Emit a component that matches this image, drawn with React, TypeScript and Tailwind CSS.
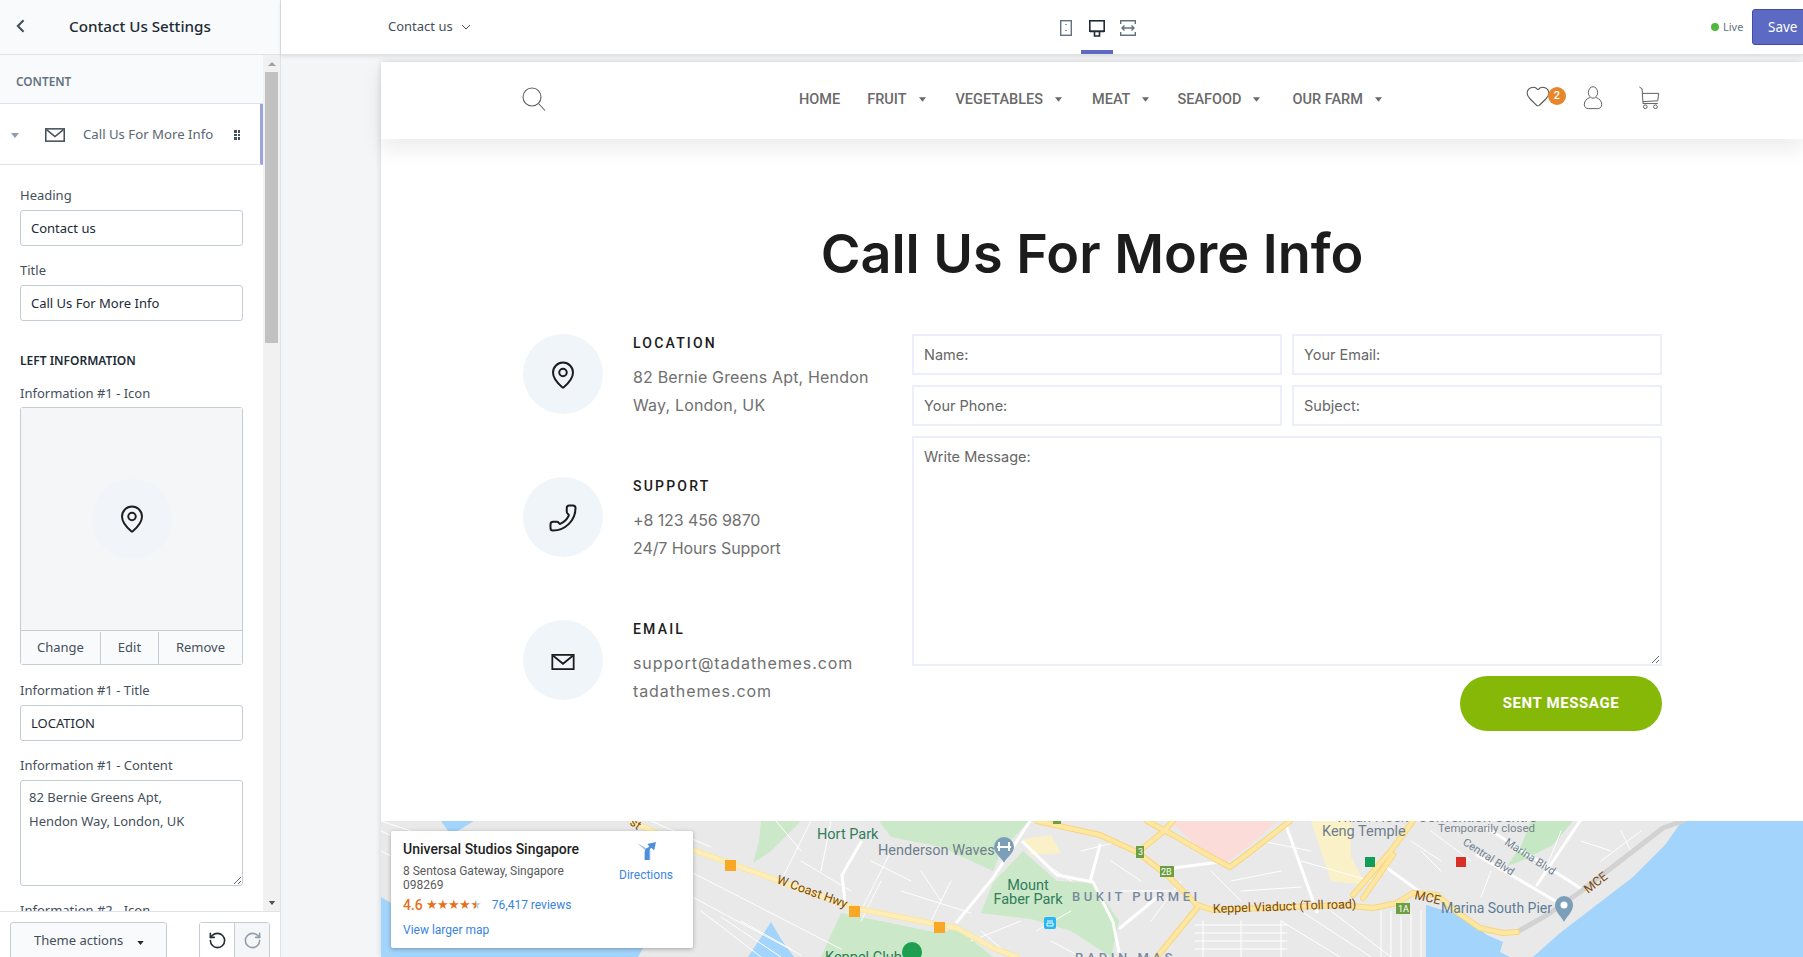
import { Heart, MapPin, Phone, RotateCcw, RotateCw } from "lucide-react";

const navItems = [
  { label: "HOME", caret: false, gap: "mr-[27px]" },
  { label: "FRUIT", caret: true, gap: "mr-[30px]" },
  { label: "VEGETABLES", caret: true, gap: "mr-[30px]" },
  { label: "MEAT", caret: true, gap: "mr-[28px]" },
  { label: "SEAFOOD", caret: true, gap: "mr-[32px]" },
  { label: "OUR FARM", caret: true, gap: "" },
];

function Caret({ className }: { className: string }) {
  return (
    <svg viewBox="0 0 8 5" className={className}>
      <path d="M0 0h8L4 5z" fill="currentColor" />
    </svg>
  );
}

function MailIcon({ className }: { className: string }) {
  return (
    <svg viewBox="0 0 26 18" className={className} fill="none" stroke="currentColor" strokeWidth="2">
      <rect x="1" y="1" width="24" height="16" />
      <path d="M2 2l11 9 11-9" />
    </svg>
  );
}

function Field({ label, value }: { label: string; value: string }) {
  return (
    <div className="mt-[16px] px-[20px]">
      <div className="h-[17px] text-[13px] leading-[17px] text-[#454f5b]">{label}</div>
      <input
        readOnly
        value={value}
        className="mt-[6px] block h-[36px] w-[223px] rounded-[3px] border border-[#c4cdd5] bg-white px-[10px] text-[13px] text-[#212b36]"
      />
    </div>
  );
}

function Sidebar() {
  return (
    <aside className="flex h-full w-[281px] shrink-0 flex-col border-r border-[#dfe3e8] bg-white font-['Noto_Sans',sans-serif]">
      <div className="flex h-[55px] shrink-0 items-center border-b border-[#dfe3e8] bg-[#f9fafb] pb-[2px]">
        <svg viewBox="0 0 10 16" className="ml-[16px] h-[14px] w-[9px] text-[#454f5b]" fill="none" stroke="currentColor" strokeWidth="2.4">
          <path d="M8.5 1.5L2 8l6.500 6.500" />
        </svg>
        <h1 className="ml-[44px] text-[15.200px] font-medium text-[#212b36]">Contact Us Settings</h1>
      </div>

      <div className="flex min-h-0 flex-1">
        <div className="w-[263px] overflow-hidden">
          <div className="flex h-[49px] items-center border-b border-[#dfe3e8] bg-[#f9fafb] pt-[5px] pl-[16px]">
            <span className="text-[11.800px] font-semibold text-[#637381]">CONTENT</span>
          </div>
          <div className="flex h-[61px] items-center border-b border-r-[3px] border-b-[#dfe3e8] border-r-[#9aa3dc] bg-white pt-[2px]">
            <Caret className="ml-[11px] h-[5px] w-[8px] text-[#919eab]" />
            <MailIcon className="ml-[26px] h-[16px] w-[20px] text-[#454f5b]" />
            <span className="ml-[18px] text-[13.200px] text-[#5b6770]">Call Us For More Info</span>
            <div className="ml-[21px] grid grid-cols-2 gap-[1px]">
              {[0, 1, 2, 3, 4, 5].map((dot) => (
                <span key={dot} className="size-[2.500px] bg-[#454f5b]" />
              ))}
            </div>
          </div>

          <div className="pt-[6px]">
            <Field label="Heading" value="Contact us" />
            <Field label="Title" value="Call Us For More Info" />

            <div className="mt-[32px] px-[20px] text-[12px] font-semibold leading-[16px] text-[#212b36]">LEFT INFORMATION</div>

            <div className="mt-[16px] px-[20px]">
              <div className="h-[17px] text-[13px] leading-[17px] text-[#454f5b]">Information #1 - Icon</div>
              <div className="mt-[5px] w-[223px] rounded-[3px] border border-[#c4cdd5]">
                <div className="flex h-[222px] items-center justify-center bg-[#f4f6f8]">
                  <div className="flex size-[80px] items-center justify-center rounded-full bg-[#f1f5f9]">
                    <MapPin size={30} strokeWidth={1.6} className="text-[#1f1f1f]" />
                  </div>
                </div>
                <div className="flex h-[34px] border-t border-[#c4cdd5] bg-[#f9fafb] pt-[1px] text-[13px] text-[#454f5b]">
                  <div className="flex w-[80px] items-center justify-center border-r border-[#c4cdd5]">Change</div>
                  <div className="flex w-[58px] items-center justify-center border-r border-[#c4cdd5]">Edit</div>
                  <div className="flex flex-1 items-center justify-center">Remove</div>
                </div>
              </div>
            </div>

            <div className="pt-[1px]">
              <Field label="Information #1 - Title" value="LOCATION" />
            </div>

            <div className="mt-[16px] px-[20px]">
              <div className="h-[17px] text-[13px] leading-[17px] text-[#454f5b]">Information #1 - Content</div>
              <textarea
                readOnly
                value={"82 Bernie Greens Apt,\nHendon Way, London, UK"}
                className="mt-[6px] block h-[106px] w-[223px] rounded-[3px] border border-[#c4cdd5] bg-white px-[8px] py-[4px] text-[13px] leading-[24px] text-[#454f5b]"
              />
            </div>

            <div className="mt-[16px] px-[20px] text-[13px] leading-[17px] text-[#454f5b]">Information #2 - Icon</div>
          </div>
        </div>

        <div className="flex w-[17px] shrink-0 flex-col items-center bg-[#f1f1f1]">
          <div className="flex h-[17px] items-center justify-center text-[#a3a3a3]">
            <svg viewBox="0 0 8 4" className="h-[4px] w-[8px]"><path d="M0 4h8L4 0z" fill="currentColor" /></svg>
          </div>
          <div className="h-[271px] w-[13px] bg-[#c1c1c1]" />
          <div className="mt-auto flex h-[17px] items-center justify-center text-[#505050]">
            <Caret className="h-[4px] w-[8px]" />
          </div>
        </div>
      </div>

      <div className="flex h-[46px] shrink-0 border-t border-[#dfe3e8] bg-white pt-[10px] pl-[10px]">
        <div className="flex h-[40px] w-[157px] items-start rounded-t-[3px] border border-[#c4cdd5] bg-[#f9fafb] pt-[8px] pl-[23px] text-[13px] text-[#454f5b]">
          Theme actions
          <Caret className="mt-[10px] ml-[14px] h-[4px] w-[7px] text-[#212b36]" />
        </div>
        <div className="ml-[32px] flex h-[40px] w-[71px] rounded-t-[3px] border border-[#c4cdd5]">
          <div className="flex w-[35px] justify-center border-r border-[#c4cdd5] bg-white pt-[8px]">
            <RotateCcw size={19} className="text-[#212b36]" />
          </div>
          <div className="flex flex-1 justify-center bg-[#f4f6f8] pt-[8px]">
            <RotateCw size={19} className="text-[#919eab]" />
          </div>
        </div>
      </div>
    </aside>
  );
}

function TopBar() {
  return (
    <div className="relative z-10 flex h-[55px] shrink-0 items-center overflow-hidden border-b border-[#dfe3e8] bg-white pl-[107px] font-['Noto_Sans',sans-serif] shadow-[0_1px_4px_rgba(0,0,0,0.12)]">
      <span className="w-[65px] shrink-0 whitespace-nowrap text-[13px] text-[#454f5b]">Contact us</span>
      <svg viewBox="0 0 10 6" className="mt-[-1px] ml-[8px] h-[6px] w-[10px] shrink-0 text-[#454f5b]" fill="none" stroke="currentColor">
        <path d="M1 1l4 4 4-4" />
      </svg>

      <div className="ml-[588px] flex h-full shrink-0 items-start">
        <div className="flex w-[22px] pt-[20px] pl-[1px]">
          <svg viewBox="0 0 12 16" className="h-[16px] w-[12px] text-[#637381]" fill="none" stroke="currentColor" strokeWidth="1.4">
            <rect x=".7" y=".7" width="10.600" height="14.600" />
            <path d="M6 4v1M6 10v1" />
          </svg>
        </div>
        <div className="relative flex h-full w-[32px] justify-center pt-[20px]">
          <svg viewBox="0 0 16 17" className="h-[17px] w-[16px] text-[#212b36]" fill="none" stroke="currentColor" strokeWidth="1.6">
            <rect x=".8" y=".8" width="14.400" height="10.400" />
            <path d="M.8 11.500h14.400M5.500 12v4h5v-4" />
          </svg>
          <span className="absolute right-0 bottom-0 left-0 h-[4px] bg-[#5c6ac4]" />
        </div>
        <div className="ml-[7px] pt-[20px]">
          <svg viewBox="0 0 16 16" className="h-[16px] w-[16px] text-[#637381]" fill="none" stroke="currentColor" strokeWidth="1.4">
            <path d="M.7 4V.7h14.600V4M.7 12v3.300h14.600V12M2 8h12M4.500 5.500L2 8l2.500 2.500M11.500 5.500L14 8l-2.500 2.500" />
          </svg>
        </div>
      </div>

      <span className="ml-[575px] size-[8px] shrink-0 rounded-full bg-[#50b83c]" />
      <span className="ml-[4px] w-[25px] shrink-0 text-[11px] text-[#637381]">Live</span>
      <div className="ml-[4px] flex h-[36px] w-[70px] shrink-0 items-center rounded-[3px] border border-[#3f4eae] bg-[#5c6ac4] pl-[15px] text-[13.500px] text-white">
        Save
      </div>
    </div>
  );
}

function SiteHeader() {
  return (
    <header className="relative z-10 h-[77px] bg-white shadow-[0_10px_20px_rgba(0,0,0,0.08)]">
      <div className="ml-[142px] flex h-full w-[1139px] items-center pb-[4px]">
        <svg viewBox="0 0 24 24" className="-ml-[1px] h-[24px] w-[24px] text-[#5f5f5f]" fill="none" stroke="currentColor" strokeWidth="1.1">
          <circle cx="10" cy="10" r="9" />
          <path d="M16.500 16.500L23 23.500" />
        </svg>
        <nav className="mt-[2px] ml-[253px] flex items-center font-['Roboto',sans-serif] text-[14.500px] font-medium text-[#6a6a6a]">
          {navItems.map((item) => (
            <div key={item.label} className={`flex items-center ${item.gap}`}>
              <span>{item.label}</span>
              {item.caret && <Caret className="ml-[12px] h-[5px] w-[7px]" />}
            </div>
          ))}
        </nav>
        <div className="mt-[-2px] ml-auto flex items-center pr-[2px]">
          <div className="relative mt-[-3px]">
            <Heart size={26} strokeWidth={1} className="text-[#555]" />
            <span className="absolute top-[4px] left-[23px] flex size-[18px] items-center justify-center rounded-full bg-[#e8862b] font-['Roboto',sans-serif] text-[11px] font-medium text-white">
              2
            </span>
          </div>
          <svg viewBox="0 0 20 26" className="ml-[32px] h-[24px] w-[20px] text-[#555]" fill="none" stroke="currentColor" strokeWidth="1">
            <ellipse cx="10" cy="7" rx="5" ry="6.200" />
            <path d="M6.500 12.500C3 14 .6 16 .6 20c0 3 2 4.500 4.500 4.500h9.800c2.500 0 4.500-1.500 4.500-4.500 0-4-2.400-6-5.900-7.500" />
          </svg>
          <svg viewBox="0 0 22 26" className="ml-[35px] h-[24px] w-[22px] text-[#555]" fill="none" stroke="currentColor" strokeWidth="1">
            <path d="M.5 1L3.500 3l1 16h16M4 8h17.500l-1 8-16 1" />
            <circle cx="7" cy="22.500" r="2" />
            <circle cx="18" cy="22.500" r="2" />
          </svg>
        </div>
      </div>
    </header>
  );
}

function InfoBlock({
  icon,
  title,
  lines,
  spacing,
}: {
  icon: React.ReactNode;
  title: string;
  lines: string[];
  spacing: string;
}) {
  return (
    <div className="flex h-[143px] gap-[30px]">
      <div className="flex size-[80px] shrink-0 items-center justify-center rounded-full bg-[#f0f5fa] pt-[2px] text-[#1c1c1c]">{icon}</div>
      <div>
        <div className="mt-[1px] font-['Roboto',sans-serif] text-[14px] leading-[16px] font-medium tracking-[2.200px] text-[#1c1c1c]">{title}</div>
        <div className={`mt-[12px] font-['Inter',sans-serif] text-[16px] leading-[28px] text-[#707070] ${spacing}`}>
          {lines.map((line) => (
            <div key={line}>{line}</div>
          ))}
        </div>
      </div>
    </div>
  );
}

const inputClass =
  "h-[41px] min-w-0 border-2 border-[#eceefb] bg-white px-[10px] font-['Inter',sans-serif] text-[14.500px] text-[#555] placeholder:text-[#666]";

function ContactSection() {
  return (
    <section className="h-[682px] bg-white pt-[83px]">
      <h2 className="text-center font-['Inter',sans-serif] text-[54px] leading-[64px] font-semibold text-[#1c1c1c]">Call Us For More Info</h2>
      <div className="mt-[48px] ml-[142px] flex w-[1139px]">
        <div className="w-[389px] shrink-0">
          <InfoBlock spacing="tracking-[0.17px]" icon={<MapPin size={30} strokeWidth={1.6} />} title="LOCATION" lines={["82 Bernie Greens Apt, Hendon", "Way, London, UK"]} />
          <InfoBlock spacing="tracking-[-0.1px]" icon={<Phone size={30} strokeWidth={1.6} className="-scale-x-100" />} title="SUPPORT" lines={["+8 123 456 9870", "24/7 Hours Support"]} />
          <InfoBlock spacing="tracking-[0.9px]" icon={<MailIcon className="mt-[2px] h-[16px] w-[26px]" />} title="EMAIL" lines={["support@tadathemes.com", "tadathemes.com"]} />
        </div>
        <form className="grid flex-1 grid-cols-2 content-start gap-x-[10px] gap-y-[10px]">
          <input className={inputClass} placeholder="Name:" />
          <input className={inputClass} placeholder="Your Email:" />
          <input className={inputClass} placeholder="Your Phone:" />
          <input className={inputClass} placeholder="Subject:" />
          <textarea
            className="col-span-2 h-[230px] border-2 border-[#eceefb] bg-white px-[10px] py-[8px] font-['Inter',sans-serif] text-[14.500px] placeholder:text-[#666]"
            placeholder="Write Message:"
          />
          <div className="col-span-2 flex justify-end">
            <button type="button" className="h-[55px] w-[202px] rounded-full bg-[#86b807] font-['Roboto',sans-serif] text-[15px] font-bold tracking-[0.6px] text-white">
              SENT MESSAGE
            </button>
          </div>
        </form>
      </div>
    </section>
  );
}

const thinRoads = [
  "M0 10L60 38M0 30L40 50M0 0L90 30M270 0L330 26M300 70L420 134M312 52L460 128M320 90L380 136M340 96L400 136M360 100L410 128",
  "M395 0L420 30M430 0L400 60M420 40L470 70M450 0L440 50M490 40L530 60M500 60L480 100M510 30L480 90M520 70L590 92M540 50L560 80M570 60L550 100",
  "M600 110L630 136M590 120L640 100M655 110L690 90M670 120L700 136M690 60L660 40M730 40L760 60M740 70L790 70M700 30L740 20M770 100L800 60",
  "M814 104H906M814 112H906M814 120H906M814 128H906M822 100V136M860 100V136M900 100V136M900 100L959 136M920 90L990 136M950 90L1010 136",
  "M1000 90V136M1010 90V136M1020 96V136M1030 92V136M1040 90V136M850 60L900 50M860 70L920 66M830 50L860 80M880 20L930 30M920 40L990 60",
  "M1030 20L1060 40M1050 10L1090 40M1040 30L1060 50M1110 50L1100 76M1180 10L1160 60M1200 20L1230 30M1240 10L1250 30M1220 40L1260 10",
];

const yellowRoads = [
  "M656 0L719 14 756 31 786 54 816 84 832 89 959 84 992 87 1016 82 1032 72 1056 74 1076 91 1099 107 1122 112 1136 111",
  "M816 87L776 136M762 27L782 11 792 0M766 0L792 14 832 37 849 46 869 31 909 0M1032 0L1009 31 972 74M1012 34L982 77",
];

function MapCanvas() {
  return (
    <svg viewBox="0 0 1422 136" className="absolute inset-0 h-full w-full font-['Roboto',sans-serif]">
      <rect width="1422" height="136" fill="#e9e9e9" />
      <path d="M1301 0L1284 24 1252 56 1179 112 1152 136H1422V0z" fill="#a3d4fb" />
      <path d="M1045 84L1079 94 1106 114 1122 121 1119 131 1129 136H1045z" fill="#a3d4fb" />
      <path d="M0 76L40 100 120 118 262 127 257 136H0zM60 0H93L70 14z" fill="#a3d4fb" />
      <path d="M367 136L390 101 400 118 413 136z" fill="#a3d4fb" />

      <path d="M380 0H420L390 30 372 42 378 20zM498 0H648L620 30 612 50 560 26 510 16z" fill="#cbe8c8" />
      <path d="M642 30L676 60 712 62 738 100 730 136 690 110 650 98 600 92 612 62z" fill="#cbe8c8" />
      <path d="M460 92L558 112 576 107 612 136H440z" fill="#cbe8c8" />
      <path d="M1150 0H1192L1172 24 1140 40 1126 45 1140 25z" fill="#c6e7c4" />
      <path d="M789 0H896L869 24 842 44 815 24z" fill="#fbdcd8" />
      <path d="M642 18L670 14 680 32 650 34z" fill="#fbf1c8" />
      <path d="M930 0H970V36L985 64 950 60 940 30z" fill="#fbf1c8" />

      <g fill="none" stroke="#ffffff" strokeLinecap="round" strokeWidth="1">
        {thinRoads.map((d) => (
          <path key={d} d={d} />
        ))}
      </g>
      <g fill="none" stroke="#ffffff" strokeLinecap="round" strokeWidth="3">
        <path d="M649 0L612 57 576 101M642 21L676 54 712 61 732 101 739 136M719 24L709 61M739 107L779 74M906 7L936 91M480 21L461 54 464 81" />
        <path d="M792 47L839 41M1096 34L1176 81M1106 7L1199 67M1199 0L1156 64M1002 44L1039 71" />
      </g>

      <g fill="none" strokeLinecap="round" strokeLinejoin="round">
        <path d="M1136 111L1166 94 1199 71 1282 7 1302 0" stroke="#d2d2d2" strokeWidth="5" />
        <path d="M250 0L312 29 473 87 559 104 576 107 612 127 636 136" stroke="#fae5a2" strokeWidth="6" />
        <path d="M250 0L312 29 473 87 559 104 576 107 612 127 636 136" stroke="#fdeeb9" strokeWidth="4" />
        <g stroke="#f8d67e" strokeWidth="6">
          {yellowRoads.map((d) => (
            <path key={d} d={d} />
          ))}
        </g>
        <g stroke="#fde7a3" strokeWidth="4">
          {yellowRoads.map((d) => (
            <path key={d} d={d} />
          ))}
        </g>
      </g>

      <g fill="#f9a825">
        <rect x="344" y="39" width="11" height="11" />
        <rect x="468" y="85" width="11" height="11" />
        <rect x="553" y="101" width="11" height="11" />
      </g>
      <rect x="984" y="36" width="10" height="10" fill="#0f9d58" />
      <rect x="1075" y="36" width="10" height="10" fill="#d93025" />

      <g fontSize="9" fill="#ffffff">
        <rect x="755" y="25" width="8" height="12" fill="#6d9e3f" />
        <text x="757" y="34">3</text>
        <rect x="779" y="45" width="14" height="11" fill="#6d9e3f" />
        <text x="780" y="54">2B</text>
        <rect x="1015" y="82" width="14" height="11" fill="#6d9e3f" />
        <text x="1017" y="91">1A</text>
        <rect x="672" y="0" width="8" height="3" fill="#6d9e3f" />
      </g>

      <g fontSize="14.500" fill="#2f7d5b">
        <text x="436" y="18">Hort Park</text>
        <text x="647" y="69" textAnchor="middle">Mount</text>
        <text x="647" y="83" textAnchor="middle">Faber Park</text>
        <text x="444" y="141">Keppel Club</text>
      </g>
      <g fontSize="14.500" fill="#6f7f8e">
        <text x="497" y="34">Henderson Waves</text>
        <text x="941" y="15">Keng Temple</text>
        <text x="954" y="1">Thian Hock</text>
        <text x="1037" y="1">Convention Centre</text>
      </g>
      <text x="1060" y="92" fontSize="14" fill="#5d7d96">Marina South Pier</text>
      <text x="1057" y="11" fontSize="11.500" fill="#79858f">Temporarily closed</text>
      <g fontSize="13" fontWeight="500" fill="#7b8aa0" letterSpacing="3.500">
        <text x="691" y="80">BUKIT PURMEI</text>
        <text x="694" y="141">RADIN MAS</text>
      </g>
      <g fontSize="11" fill="#6f7f8e">
        <text transform="translate(1081 23) rotate(33)">Central Blvd</text>
        <text transform="translate(1123 23) rotate(33)">Marina Blvd</text>
      </g>
      <g fontSize="12.500" fill="#7a4a10">
        <text transform="translate(832 92) rotate(-2)">Keppel Viaduct (Toll road)</text>
        <text transform="translate(395 62) rotate(20)">W Coast Hwy</text>
        <text transform="translate(1033 78) rotate(12)">MCE</text>
        <text transform="translate(1207 73) rotate(-38)">MCE</text>
        <text transform="translate(248 3) rotate(35)">st</text>
      </g>

      <path d="M623 42c-3-6-10-10-10-16a10 10 0 0120 0c0 6-7 10-10 16z" fill="#7b9fb8" />
      <path d="M618 21v9M628 21v9M616 26h14" stroke="#ffffff" strokeWidth="2" />
      <path d="M1183 101c-3-6-9-10-9-17a9 9 0 0118 0c0 7-6 11-9 17z" fill="#7b9fb8" />
      <circle cx="1183" cy="84" r="3.500" fill="#ffffff" />
      <circle cx="531" cy="131" r="10" fill="#1e9e4f" />
      <rect x="663" y="96" width="12" height="12" rx="2" fill="#29b6f6" />
      <path d="M666 100h6M666 102h6v3h-6z" stroke="#ffffff" fill="none" />
    </svg>
  );
}

function MapSection() {
  return (
    <section className="relative h-[136px] overflow-hidden">
      <MapCanvas />
      <div className="absolute top-[10px] left-[10px] h-[117px] w-[302px] rounded-[2px] bg-white px-[12px] pt-[9px] font-['Roboto',sans-serif] shadow-[0_1px_4px_rgba(0,0,0,0.3)]">
        <div className="flex">
          <div className="w-[207px]">
            <div className="text-[14px] leading-[18px] font-medium text-[#1f1f1f]">Universal Studios Singapore</div>
            <div className="mt-[6px] w-[170px] text-[12px] leading-[14px] text-[#5b5b5b]">8 Sentosa Gateway, Singapore 098269</div>
            <div className="mt-[5px] flex items-center text-[14px] leading-[16px] font-medium text-[#e7711b]">
              4.6
              <span className="relative ml-[3px] text-[13px] tracking-[-1px]">
                ★★★★<span className="text-[#c8c8c8]">★</span>
                <span className="absolute top-0 right-[5px] w-[5px] overflow-hidden">★</span>
              </span>
              <span className="ml-[11px] text-[12px] font-normal text-[#3a84df]">76,417 reviews</span>
            </div>
            <div className="mt-[10px] text-[12px] leading-[14px] text-[#3a84df]">View larger map</div>
          </div>
          <div className="ml-[8px] flex w-[56px] flex-col items-center pt-[2px]">
            <svg viewBox="0 0 20 20" className="h-[19px] w-[19px]">
              <path d="M0 1l9 8v10h5V9z" fill="#9cc3ee" />
              <path d="M8 19v-8c0-3 2-5 5-6l-2-3 9-2-2 9-3-3c-1 1-2 2-2 4v9z" fill="#4d8fdc" />
            </svg>
            <div className="mt-[7px] text-[12px] leading-[14px] text-[#3a84df]">Directions</div>
          </div>
        </div>
      </div>
    </section>
  );
}

export default function App() {
  return (
    <div className="flex h-[957px] w-full overflow-hidden bg-white">
      <Sidebar />
      <div className="flex min-w-0 flex-1 flex-col">
        <TopBar />
        <div className="flex min-h-0 flex-1 bg-[#f4f5f7] pt-[7px] pl-[100px]">
          <main className="min-w-0 flex-1 shadow-[0_0_6px_rgba(0,0,0,0.15)]">
            <SiteHeader />
            <ContactSection />
            <MapSection />
          </main>
        </div>
      </div>
    </div>
  );
}
